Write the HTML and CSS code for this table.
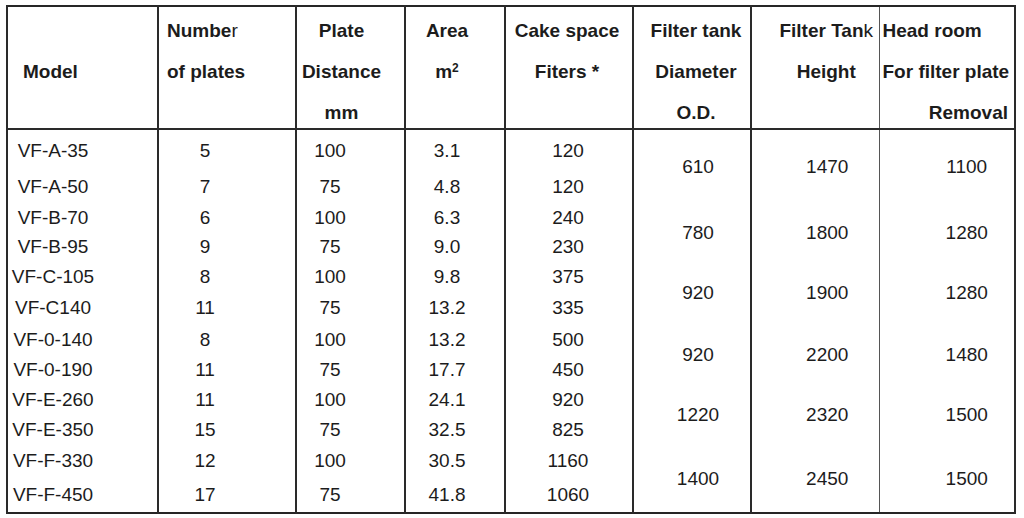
FILE: index.html
```html
<!DOCTYPE html>
<html lang="en">
<head>
<meta charset="utf-8">
<title>Filter specifications</title>
<link rel="stylesheet" href="styles.css">
</head>
<body>
<table class="spec">
  <colgroup>
    <col class="w1"><col class="w2"><col class="w3"><col class="w4">
    <col class="w5"><col class="w6"><col class="w7"><col class="w8">
  </colgroup>
  <thead>
    <tr class="head">
      <th class="h-model"><span class="ln">&nbsp;</span><span class="ln">Model</span><span class="ln">&nbsp;</span></th>
      <th class="h-num"><span class="ln">Numbe<span class="lt">r</span></span><span class="ln">of plates</span><span class="ln">&nbsp;</span></th>
      <th class="h-dist"><span class="ln">Plate</span><span class="ln">Distance</span><span class="ln">mm</span></th>
      <th class="h-area"><span class="ln">Area</span><span class="ln">m<sup>2</sup></span><span class="ln">&nbsp;</span></th>
      <th class="h-cake"><span class="ln">Cake space</span><span class="ln">Fiters *</span><span class="ln">&nbsp;</span></th>
      <th class="h-dia"><span class="ln">Filter tank</span><span class="ln">Diameter</span><span class="ln">O.D.</span></th>
      <th class="h-ht"><span class="ln">Filter Tan<span class="lt">k</span></span><span class="ln">Height</span><span class="ln">&nbsp;</span></th>
      <th class="h-room"><span class="ln">Head room</span><span class="ln">For filter plate</span><span class="ln rt">Removal</span></th>
    </tr>
  </thead>
  <tbody>
    <tr class="r1"><td class="c1">VF-A-35</td><td class="c2">5</td><td class="c3">100</td><td class="c4">3.1</td><td class="c5">120</td><td class="c6" rowspan="2">610</td><td class="c7" rowspan="2">1470</td><td class="c8" rowspan="2">1100</td></tr>
    <tr class="r2"><td class="c1">VF-A-50</td><td class="c2">7</td><td class="c3">75</td><td class="c4">4.8</td><td class="c5">120</td></tr>
    <tr class="r3"><td class="c1">VF-B-70</td><td class="c2">6</td><td class="c3">100</td><td class="c4">6.3</td><td class="c5">240</td><td class="c6" rowspan="2">780</td><td class="c7" rowspan="2">1800</td><td class="c8" rowspan="2">1280</td></tr>
    <tr class="r4"><td class="c1">VF-B-95</td><td class="c2">9</td><td class="c3">75</td><td class="c4">9.0</td><td class="c5">230</td></tr>
    <tr class="r5"><td class="c1">VF-C-105</td><td class="c2">8</td><td class="c3">100</td><td class="c4">9.8</td><td class="c5">375</td><td class="c6" rowspan="2">920</td><td class="c7" rowspan="2">1900</td><td class="c8" rowspan="2">1280</td></tr>
    <tr class="r6"><td class="c1">VF-C140</td><td class="c2">11</td><td class="c3">75</td><td class="c4">13.2</td><td class="c5">335</td></tr>
    <tr class="r7"><td class="c1">VF-0-140</td><td class="c2">8</td><td class="c3">100</td><td class="c4">13.2</td><td class="c5">500</td><td class="c6" rowspan="2">920</td><td class="c7" rowspan="2">2200</td><td class="c8" rowspan="2">1480</td></tr>
    <tr class="r8"><td class="c1">VF-0-190</td><td class="c2">11</td><td class="c3">75</td><td class="c4">17.7</td><td class="c5">450</td></tr>
    <tr class="r9"><td class="c1">VF-E-260</td><td class="c2">11</td><td class="c3">100</td><td class="c4">24.1</td><td class="c5">920</td><td class="c6" rowspan="2">1220</td><td class="c7" rowspan="2">2320</td><td class="c8" rowspan="2">1500</td></tr>
    <tr class="r10"><td class="c1">VF-E-350</td><td class="c2">15</td><td class="c3">75</td><td class="c4">32.5</td><td class="c5">825</td></tr>
    <tr class="r11"><td class="c1">VF-F-330</td><td class="c2">12</td><td class="c3">100</td><td class="c4">30.5</td><td class="c5">1160</td><td class="c6" rowspan="2">1400</td><td class="c7" rowspan="2">2450</td><td class="c8" rowspan="2">1500</td></tr>
    <tr class="r12"><td class="c1">VF-F-450</td><td class="c2">17</td><td class="c3">75</td><td class="c4">41.8</td><td class="c5">1060</td></tr>
  </tbody>
</table>
</body>
</html>
```
FILE: styles.css
```css
html, body {
  margin: 0;
  padding: 0;
  background: #ffffff;
}

body {
  font-family: "Liberation Sans", Arial, sans-serif;
  color: #1c1c1c;
}

.spec {
  margin: 5px 0 0 6px;
  border-collapse: collapse;
  table-layout: fixed;
  width: 1010px;
  border: 2px solid #262626;
}

.w1 { width: 151px; }
.w2 { width: 138px; }
.w3 { width: 109px; }
.w4 { width: 100px; }
.w5 { width: 128px; }
.w6 { width: 118px; }
.w7 { width: 128px; }
.w8 { width: 136px; }

.spec th,
.spec td {
  border-left: 2px solid #2a2a2a;
  border-right: 2px solid #2a2a2a;
  padding: 0;
  white-space: nowrap;
  overflow: visible;
}

.spec th.h-ht,
.spec td.c7 {
  border-right: 1px solid #555555;
}

.spec th.h-room,
.spec td.c8 {
  border-left: 1px solid #555555;
}

.spec th {
  border-bottom: 2px solid #2a2a2a;
  font-weight: 700;
  font-size: 19px;
  vertical-align: top;
  padding-top: 3px;
  text-align: center;
  height: 118px;
}

.ln {
  display: block;
  height: 41px;
  line-height: 41px;
}

.ln:last-child {
  height: 36px;
}

.lt { font-weight: 400; }

.spec sup {
  font-size: 12px;
  vertical-align: 6px;
  line-height: 0;
}

.spec th.h-model { text-align: left; padding-left: 15px; }
.spec th.h-num { text-align: left; padding-left: 8px; }
.spec th.h-dist { padding-right: 18px; }
.spec th.h-area { padding-right: 16px; }
.spec th.h-cake { padding-right: 4px; }
.spec th.h-dia { padding-left: 8px; }
.spec th.h-ht { padding-left: 22px; }
.spec th.h-room { text-align: left; padding-left: 3px; padding-right: 6px; }
.spec th.h-room .rt { text-align: right; }

.spec td {
  font-size: 19px;
  text-align: center;
  vertical-align: middle;
  line-height: 22px;
}

.spec td.c1 { padding-right: 59px; }
.spec td.c2 { padding-right: 44px; }
.spec td.c3 { padding-right: 41px; }
.spec td.c4 { padding-right: 16px; }
.spec td.c5 { padding-right: 2px; }
.spec td.c6 { padding-left: 12px; }
.spec td.c7 { padding-left: 24px; }
.spec td.c8 { padding-left: 40px; }

.r1 { height: 42px; }
.r2 { height: 32px; }
.r3 { height: 29px; }
.r4 { height: 30px; }
.r5 { height: 30px; }
.r6 { height: 32px; }
.r7 { height: 31px; }
.r8 { height: 30px; }
.r9 { height: 30px; }
.r10 { height: 30px; }
.r11 { height: 32px; }
.r12 { height: 36px; }
```
